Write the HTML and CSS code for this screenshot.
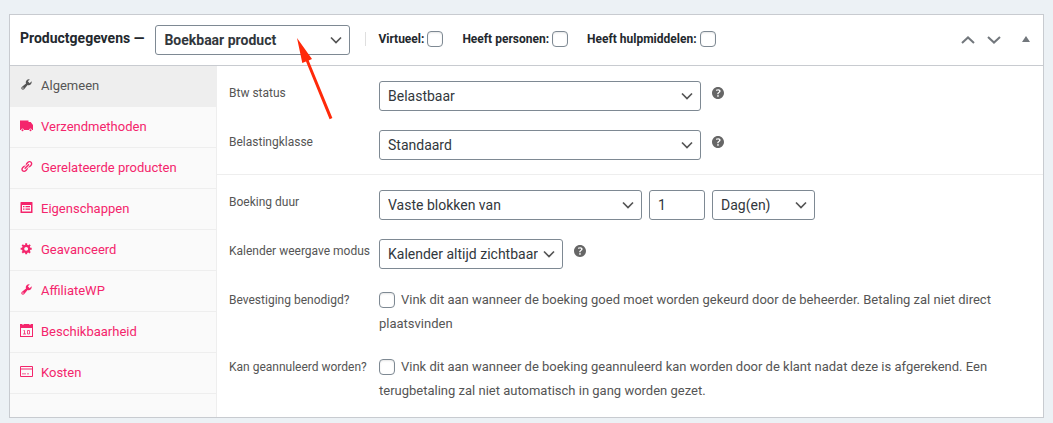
FILE: index.html
```html
<!DOCTYPE html>
<html lang="nl">
<head>
<meta charset="utf-8">
<meta name="viewport" content="width=device-width, initial-scale=1">
<title>Productgegevens</title>
<link rel="stylesheet" href="styles.css">
</head>
<body>
<svg class="symbols" aria-hidden="true">
  <symbol id="tools" viewBox="0 0 20 20"><path d="M16.680 9.770c-1.340 1.340-3.300 1.670-4.950.99l-5.410 6.520c-.99.99-2.590.99-3.580 0s-.99-2.590 0-3.570l6.520-5.420c-.68-1.650-.35-3.610.99-4.950 1.280-1.280 3.120-1.620 4.720-1.060l-2.890 2.890 2.820 2.820 2.860-2.870c.53 1.580.18 3.390-1.080 4.650zM3.810 16.210c.4.39 1.040.39 1.430 0 .4-.4.4-1.040 0-1.430-.39-.4-1.030-.4-1.430 0-.39.39-.39 1.030 0 1.430z"/></symbol>
  <symbol id="help" viewBox="3 3 14 14"><path d="M17 10c0-3.870-3.140-7-7-7-3.870 0-7 3.130-7 7s3.130 7 7 7c3.860 0 7-3.130 7-7zm-6.300 1.480H9.140v-.43c0-.38.08-.7.24-.98s.46-.57.88-.89c.41-.29.68-.53.81-.71.14-.18.2-.39.2-.62 0-.25-.09-.44-.28-.58-.19-.13-.45-.19-.79-.19-.58 0-1.250.15-2 .46l-.64-1.280c.87-.49 1.800-.74 2.770-.74.81 0 1.450.2 1.920.58.48.39.71.91.71 1.550 0 .43-.09.8-.29 1.110-.19.32-.57.67-1.110 1.060-.38.28-.61.49-.71.63-.1.15-.15.34-.15.57v.35zm-1.470 2.740c-.18-.17-.27-.42-.27-.73 0-.33.08-.58.26-.75s.43-.25.77-.25c.32 0 .57.09.75.26s.27.42.27.74c0 .3-.09.55-.27.72-.18.18-.43.27-.75.27-.33 0-.58-.09-.76-.26z"/></symbol>
</svg>

<section class="panel">
  <header class="panel-header">
    <h2 class="panel-title"><label for="type">Productgegevens —</label></h2>
    <select class="control control-type" id="type"><option>Boekbaar product</option></select>
    <div class="type-options">
      <label class="type-option">Virtueel: <input class="checkbox" type="checkbox"></label>
      <label class="type-option">Heeft personen: <input class="checkbox" type="checkbox"></label>
      <label class="type-option">Heeft hulpmiddelen: <input class="checkbox" type="checkbox"></label>
    </div>
    <div class="panel-actions">
      <button class="action" type="button" aria-label="Omhoog verplaatsen"><svg width="14" height="8" viewBox="0 0 14 8"><path class="stroke" d="M1 7l6-5.600 6 5.600"/></svg></button>
      <button class="action" type="button" aria-label="Omlaag verplaatsen"><svg width="14" height="8" viewBox="0 0 14 8"><path class="stroke" d="M1 1l6 5.600 6-5.600"/></svg></button>
      <button class="action action-toggle" type="button" aria-label="Paneel in- of uitklappen"><svg width="8" height="6" viewBox="0 0 8 6"><path d="M4 0l4 6H0z"/></svg></button>
    </div>
    <svg class="pointer" width="38" height="84" viewBox="0 0 38 84" aria-hidden="true"><path d="M1 1l15 21-3.300 1.500L36.400 81l-2.800 1.200L10 24.600 6.300 26z"/></svg>
  </header>

  <div class="panel-body">
    <nav class="tabs">
      <a class="tab tab-active" href="#"><svg class="tab-icon"><use href="#tools"/></svg>Algemeen</a>
      <a class="tab" href="#"><svg class="tab-icon" viewBox="0 0 13 13"><path d="M0 1.500h8.500V3h2.200L13 6v5h-1a1.500 1.500 0 0 0-3 0H4a1.500 1.500 0 0 0-3 0H0z"/><circle cx="2.500" cy="11.300" r="1"/><circle cx="10.500" cy="11.300" r="1"/></svg>Verzendmethoden</a>
      <a class="tab" href="#"><svg class="tab-icon" viewBox="0 0 20 20"><path d="M17.740 2.760c1.680 1.690 1.680 4.410 0 6.100l-1.530 1.520c-1.120 1.120-2.700 1.470-4.140 1.090l2.620-2.610.76-.77.76-.76c.84-.84.84-2.200 0-3.040-.84-.85-2.200-.85-3.040 0l-.77.76-3.380 3.380c-.37-1.440-.02-3.020 1.100-4.140l1.520-1.530c1.690-1.680 4.420-1.680 6.100 0zM8.590 13.430l5.340-5.340c.42-.42.42-1.100 0-1.520-.44-.43-1.130-.39-1.530 0l-5.330 5.340c-.42.42-.42 1.100 0 1.520.44.43 1.130.39 1.520 0zm-.76 2.290l4.140-4.150c.38 1.440.03 3.020-1.090 4.140l-1.520 1.530c-1.690 1.680-4.410 1.680-6.100 0-1.680-1.680-1.680-4.420 0-6.100l1.530-1.520c1.120-1.120 2.700-1.470 4.140-1.100l-4.140 4.150c-.85.84-.85 2.200 0 3.050.84.84 2.200.84 3.040 0z"/></svg>Gerelateerde producten</a>
      <a class="tab" href="#"><svg class="tab-icon" viewBox="0 0 13 13"><path fill-rule="evenodd" d="M1 1h11q.5 0 .5.500v10q0 .5-.5.500H1q-.5 0-.5-.500v-10Q.5 1 1 1zm1 3v6.500h9V4zM3 5h1.500v1.300H3zM5.500 5H10v1.300H5.500zM3 7.500h1.500v1.300H3zM5.500 7.500H10v1.300H5.500z"/></svg>Eigenschappen</a>
      <a class="tab" href="#"><svg class="tab-icon" viewBox="0 0 20 20"><path d="M18 12h-2.180c-.17.7-.44 1.350-.81 1.930l1.540 1.540-2.100 2.100-1.540-1.540c-.58.36-1.230.63-1.910.79V19H8v-2.180c-.68-.16-1.330-.43-1.910-.79l-1.540 1.540-2.120-2.120 1.540-1.540c-.36-.58-.63-1.230-.79-1.910H1V9.030h2.170c.16-.7.44-1.350.8-1.940L2.430 5.550l2.100-2.100 1.540 1.540c.58-.37 1.240-.64 1.930-.81V2h3v2.180c.68.16 1.330.43 1.910.79l1.540-1.540 2.120 2.120-1.540 1.540c.36.59.64 1.240.8 1.940H18V12zm-8.500 1.500c1.660 0 3-1.340 3-3s-1.340-3-3-3-3 1.340-3 3 1.340 3 3 3z"/></svg>Geavanceerd</a>
      <a class="tab" href="#"><svg class="tab-icon"><use href="#tools"/></svg>AffiliateWP</a>
      <a class="tab" href="#"><svg class="tab-icon" viewBox="0 0 13 13"><path fill-rule="evenodd" d="M0 0h2.500v1h1V0h6v1h1V0H13v13H0zm1 4v8h11V4z"/><path class="thin" d="M3.500 6.500h1V10M3 10h3M7.500 6.500h2V10h-2z"/></svg>Beschikbaarheid</a>
      <a class="tab" href="#"><svg class="tab-icon" viewBox="0 0 13 13"><path fill-rule="evenodd" d="M1 1h11q1 0 1 1v9q0 1-1 1H1q-1 0-1-1V2q0-1 1-1zm0 1v1.500h11V2zm0 2.500V11h11V4.500zM2 8.500h4v.8H2zM7 8.500h2v.8H7z"/></svg>Kosten</a>
    </nav>

    <form class="fields">
      <div class="group">
        <div class="row">
          <label class="label" for="tax-status">Btw status</label>
          <div class="value">
            <select class="control control-wide" id="tax-status"><option>Belastbaar</option></select>
            <svg class="help" role="img" aria-label="Hulp"><use href="#help"/></svg>
          </div>
        </div>
        <div class="row">
          <label class="label" for="tax-class">Belastingklasse</label>
          <div class="value">
            <select class="control control-wide" id="tax-class"><option>Standaard</option></select>
            <svg class="help" role="img" aria-label="Hulp"><use href="#help"/></svg>
          </div>
        </div>
      </div>
      <div class="group">
        <div class="row">
          <label class="label" for="duration-type">Boeking duur</label>
          <div class="value value-tight">
            <select class="control control-medium" id="duration-type"><option>Vaste blokken van</option></select>
            <input class="control control-number" type="text" inputmode="numeric" value="1" aria-label="Duur">
            <select class="control control-unit" aria-label="Eenheid"><option>Dag(en)</option></select>
          </div>
        </div>
        <div class="row">
          <label class="label" for="calendar">Kalender weergave modus</label>
          <div class="value">
            <select class="control control-calendar" id="calendar"><option>Kalender altijd zichtbaar</option></select>
            <svg class="help" role="img" aria-label="Hulp"><use href="#help"/></svg>
          </div>
        </div>
        <div class="row">
          <label class="label" for="confirm">Bevestiging benodigd?</label>
          <div class="description"><input class="checkbox" type="checkbox" id="confirm">Vink dit aan wanneer de boeking goed moet worden gekeurd door de beheerder. Betaling zal niet direct plaatsvinden</div>
        </div>
        <div class="row">
          <label class="label" for="cancel">Kan geannuleerd worden?</label>
          <div class="description"><input class="checkbox" type="checkbox" id="cancel">Vink dit aan wanneer de boeking geannuleerd kan worden door de klant nadat deze is afgerekend. Een terugbetaling zal niet automatisch in gang worden gezet.</div>
        </div>
      </div>
    </form>
  </div>
</section>
</body>
</html>
```

FILE: styles.css
```css
*,
*::before {
  box-sizing: border-box;
}

body {
  margin: 0;
  padding: 14px 9px 5px;
  background: #ecf1f5;
  color: #555;
  font: 13px/24px Roboto, "Liberation Sans", sans-serif;
}

.symbols {
  display: none;
}

.panel {
  background: #fff;
  border: 1px solid #c8cbd0;
}

.panel-header {
  position: relative;
  display: flex;
  align-items: center;
  min-height: 51px;
  padding: 0 11px 0 10px;
  border-bottom: 1px solid #c8cbd0;
  color: #23282d;
}

.panel-title {
  margin: 0 11px 4px 0;
  font-size: 14px;
  font-weight: 700;
}

.control {
  appearance: none;
  height: 30px;
  margin: 0;
  padding: 0 8px;
  border: 1px solid #7e8993;
  border-radius: 3px;
  background-color: #fff;
  color: #32373c;
  font: 14px/28px Roboto, "Liberation Sans", sans-serif;
}

select.control {
  padding-right: 24px;
  background-image: url("data:image/svg+xml,%3Csvg xmlns='http://www.w3.org/2000/svg' viewBox='0 0 12 8'%3E%3Cpath d='M1 1.500l5 5 5-5' fill='none' stroke='%23555' stroke-width='1.700'/%3E%3C/svg%3E");
  background-repeat: no-repeat;
  background-position: right 7px center;
  background-size: 12px 8px;
}

.control-type {
  width: 195px;
  font-weight: 700;
}

.type-options {
  display: flex;
  gap: 18px;
  margin-left: 15px;
  margin-bottom: 2px;
  padding-left: 12px;
  line-height: 14px;
  border-left: 1px solid #dfdfdf;
}

.type-option {
  display: flex;
  align-items: center;
  gap: 3px;
  height: 14px;
  font-size: 12px;
  font-weight: 700;
}

.type-option + .type-option {
  padding-left: 1px;
}

.checkbox {
  appearance: none;
  flex: none;
  width: 16px;
  height: 16px;
  margin: 0;
  border: 1px solid #7e8993;
  border-radius: 4px;
  background: #fff;
  box-shadow: inset 0 1px 2px rgba(0, 0, 0, 0.1);
}

.panel-actions {
  display: flex;
  gap: 2px;
  margin-left: auto;
}

.action {
  display: grid;
  place-items: center;
  width: 24px;
  height: 24px;
  padding: 0;
  border: 0;
  background: none;
  fill: #72777c;
}

.action-toggle {
  width: 12px;
  margin-left: 12px;
  padding-bottom: 2px;
}

.stroke {
  fill: none;
  stroke: #72777c;
  stroke-width: 2;
}

.pointer {
  position: absolute;
  top: 22px;
  left: 286px;
  fill: #ff2a0a;
  pointer-events: none;
}

.panel-body {
  display: flex;
}

.tabs {
  flex: 0 0 207px;
  background: #fafafa;
  border-right: 1px solid #eee;
}

.tab {
  display: flex;
  align-items: center;
  gap: 8px;
  height: 41px;
  padding: 0 10px;
  border-bottom: 1px solid #eee;
  color: #f4256c;
  text-decoration: none;
}

.tab-active {
  background: #eee;
  color: #555;
}

.tab-icon {
  width: 13px;
  height: 13px;
  margin-bottom: 4px;
  fill: currentColor;
}

.thin {
  fill: none;
  stroke: currentColor;
  stroke-width: 0.8;
}

.fields {
  flex: 1;
  min-width: 0;
}

.group {
  display: grid;
  gap: 19px;
  padding: 15px 12px 14px;
}

.group + .group {
  border-top: 1px solid #eee;
}

.row {
  display: grid;
  grid-template-columns: 150px minmax(0, 1fr);
}

.label {
  font-size: 12px;
}

.value {
  display: flex;
  gap: 11px;
}

.value-tight {
  gap: 7px;
}

.control-wide {
  width: 322px;
}

.control-medium {
  width: 263px;
}

.control-number {
  width: 56px;
}

.control-unit {
  width: 103px;
}

.control-calendar {
  width: 184px;
}

.help {
  width: 12px;
  height: 12px;
  margin-top: 6px;
  fill: #666;
}

.description {
  padding-right: 30px;
}

.description .checkbox {
  margin-right: 6px;
  vertical-align: -4px;
}
```
